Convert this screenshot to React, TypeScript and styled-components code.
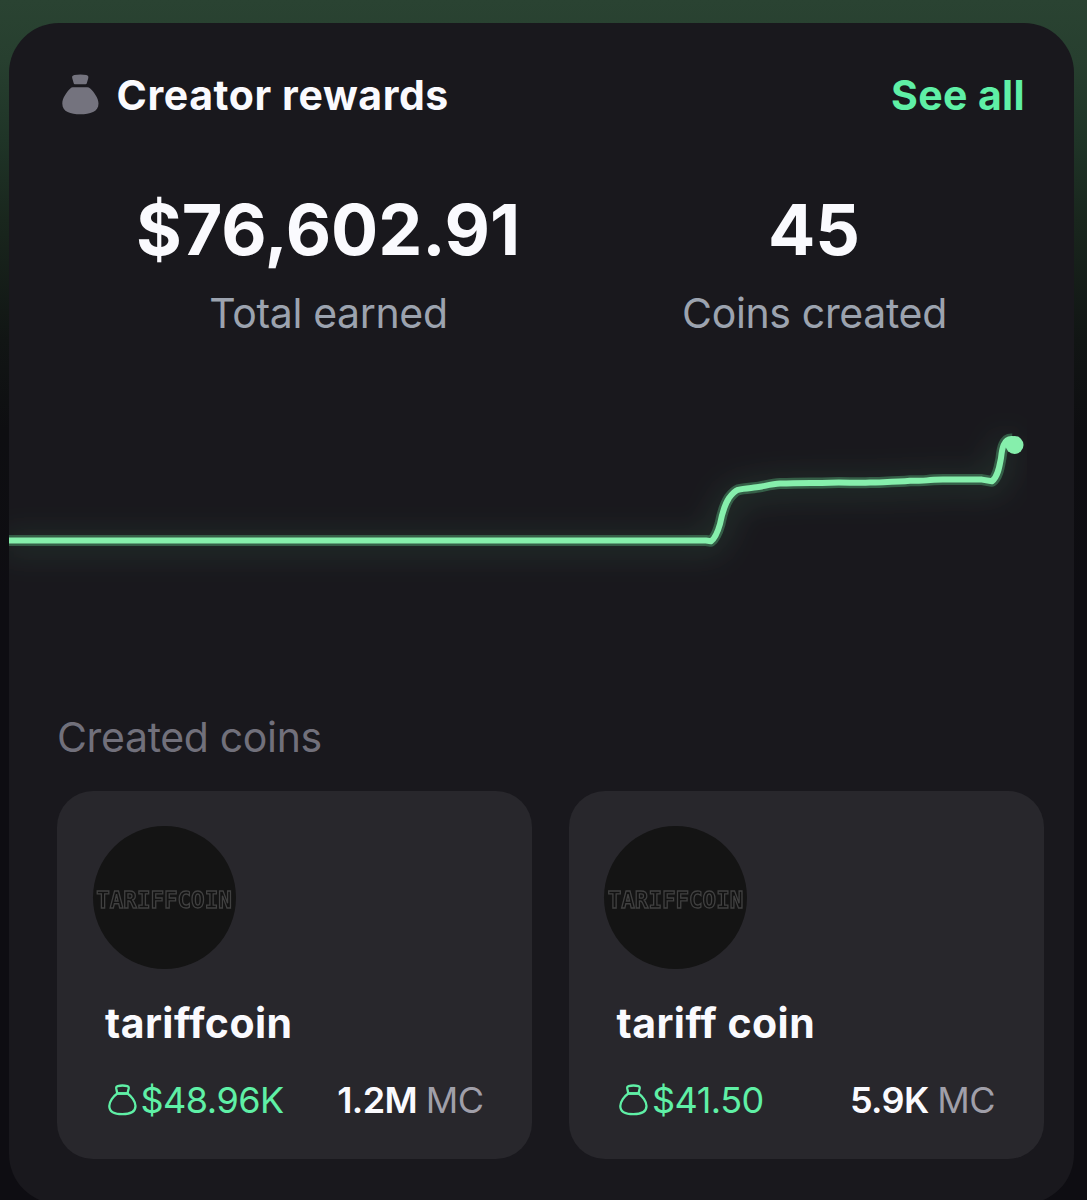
import React from "react";
import styled, { createGlobalStyle } from "styled-components";

const GlobalStyle = createGlobalStyle`
  * { box-sizing: border-box; }
  body {
    margin: 0;
    background: #0e0d12;
    font-family: Inter, "Liberation Sans", sans-serif;
    color: #fafafe;
  }
`;

const Screen = styled.div`
  height: 1200px;
  overflow: hidden;
  padding: 23px 13px 0 9px;
  background: linear-gradient(180deg, #2a4332 0px, #273f2f 60px, #1f3427 140px, #19261d 220px, #111514 340px, #0e0e11 430px, #0e0d12 600px);
`;

const Panel = styled.main`
  height: 1181px;
  border-radius: 50px;
  background: #19181d;
  display: flex;
  flex-direction: column;
`;

const Header = styled.header`
  display: flex;
  align-items: center;
  height: 52px;
  margin: 46px 49px 0 53px;
`;

const Title = styled.h1`
  margin: 0 auto 0 17.5px;
  font-size: 41px;
  font-weight: 700;
  line-height: 52px;
  letter-spacing: 0.6px;
  white-space: nowrap;
`;

const SeeAll = styled.a`
  font-size: 41px;
  font-weight: 700;
  line-height: 52px;
  letter-spacing: 0.35px;
  color: #5ff0a6;
  white-space: nowrap;
`;

const Stats = styled.section`
  display: grid;
  grid-template-columns: 486px 486px;
  margin: 65px 0 0 76.5px;
  height: 164px;
`;

const Stat = styled.div`
  display: flex;
  flex-direction: column;
  align-items: center;
`;

const StatValue = styled.div`
  font-size: 70px;
  font-weight: 700;
  line-height: 88px;
  letter-spacing: -0.1px;
  margin-right: 1px;
  white-space: nowrap;
`;

const StatLabel = styled.div`
  margin-top: 13px;
  font-size: 41px;
  line-height: 52px;
  letter-spacing: -0.35px;
  color: #9ca3af;
  white-space: nowrap;
`;

const Chart = styled.svg`
  display: block;
  width: 1018px;
  height: 200px;
  margin-top: 50px;
  flex: none;
`;

const SectionTitle = styled.h2`
  margin: 111px 0 0 48px;
  font-size: 41px;
  font-weight: 400;
  line-height: 52px;
  letter-spacing: -0.35px;
  color: #71707b;
`;

const Coins = styled.section`
  display: grid;
  grid-template-columns: 475px 475px;
  gap: 36.5px;
  margin: 28px 0 0 48px;
`;

const Coin = styled.article`
  height: 368px;
  padding: 35px 35.5px;
  border-radius: 36px;
  background: #28272c;
`;

const Avatar = styled.div`
  display: flex;
  align-items: center;
  justify-content: center;
  width: 143px;
  height: 143px;
  border-radius: 50%;
  background: #141414;
`;

const Wordmark = styled.span`
  margin-top: 4px;
  font-family: "DejaVu Sans Mono", monospace;
  font-size: 22.5px;
  font-weight: 700;
  line-height: 28px;
  color: #121212;
  -webkit-text-stroke: 1.3px #414141;
  filter: blur(0.5px);
`;

const CoinName = styled.h3`
  margin: 28px 12.5px 0;
  font-size: 41px;
  font-weight: 700;
  line-height: 52px;
  letter-spacing: 0.45px;
  white-space: nowrap;
`;

const CoinFooter = styled.div`
  display: flex;
  justify-content: space-between;
  align-items: center;
  height: 44px;
  margin: 29px 13px 0 15px;
  font-size: 36px;
  line-height: 44px;
  letter-spacing: -0.5px;
  white-space: nowrap;
`;

const Reward = styled.span`
  display: flex;
  align-items: center;
  gap: 4px;
  color: #5ff0a6;
`;

const Cap = styled.span`
  display: flex;
  gap: 8.5px;
  color: #a09fa9;
`;

const CapValue = styled.strong`
  font-weight: 600;
  letter-spacing: -0.6px;
  color: #fafafe;
`;

const BagIcon = styled.svg`
  display: block;
  flex: none;
`;

const SolidBag = () => (
  <BagIcon width="37" height="42" viewBox="0 0 37 42" fill="#74737e">
    <path d="M10.2 4C9.8 2.4 10.7 1.5 12.3 1.1C16 .3 21 .3 24.3 1.1C26 1.5 26.6 2.5 26.3 4L24.8 9.2Q24.5 10.2 23.5 10.2H12.8Q11.9 10.2 11.7 9.2Z" />
    <path d="M10.8 13.3H25.2Q27 13.3 28.2 14.5C32.5 18.5 36.5 24.5 36.5 29.5C36.5 38 28 40.3 18.3 40.3C8.6 40.3.3 38 .3 29.5C.3 24.5 4.2 18.5 8.3 14.5Q9.5 13.3 10.8 13.3Z" />
  </BagIcon>
);

const OutlineBag = () => (
  <BagIcon width="29" height="32" viewBox="0 0 29 32" fill="none" stroke="#5ff0a6" strokeWidth="2.3" strokeLinejoin="round">
    <path d="M9.3 9.5L8.2 4.2Q8 2.6 9.6 2.1C12.5 1.4 16.5 1.4 19.4 2.1Q21 2.6 20.7 4.2L19.5 9.5Z" />
    <path d="M9.3 9.5H19.5C23.5 12.3 27.5 17.5 27.5 22C27.5 28.2 22 30.2 14.4 30.2C6.9 30.2 1.3 28.2 1.3 22C1.3 17.5 5.3 12.3 9.3 9.5Z" />
  </BagIcon>
);

const LINE =
  "M-5 140.5H697L702 141.2C706 138.5 709 131 711 124C713 114 716 104 720 98C723 94 726 91 729 89.8C736 88 745 88 751 86.8C758 85.5 764 84 771 83.6C790 82.5 805 83.2 821 82.7C835 82.2 848 83.2 861 82.6C875 82 888 82 901 80.8C908 80.6 912 81.2 918 80.4C924 79.6 928 79.6 934 79.6H973L983 81.3C989 77 990.5 66 992 58C993 49 994.5 38.5 1003 39";

const RewardsChart = () => (
  <Chart viewBox="0 0 1018 200" fill="none">
    <defs>
      <filter id="glow" filterUnits="userSpaceOnUse" x="-60" y="-20" width="1140" height="260">
        <feGaussianBlur stdDeviation="15" />
      </filter>
    </defs>
    <path d={LINE} transform="translate(0 4)" stroke="#6ee79a" strokeOpacity="0.14" strokeWidth="16" filter="url(#glow)" />
    <path d={LINE} stroke="#6ee79a" strokeOpacity="0.3" strokeWidth="11" strokeLinejoin="round" />
    <path d={LINE} stroke="#86efac" strokeWidth="6" strokeLinejoin="round" strokeLinecap="round" />
    <circle cx="1005.5" cy="45" r="9" fill="#86efac" />
  </Chart>
);

const coins = [
  { name: "tariffcoin", reward: "$48.96K", cap: "1.2M" },
  { name: "tariff coin", reward: "$41.50", cap: "5.9K" },
];

export default function App() {
  return (
    <>
      <GlobalStyle />
      <Screen>
        <Panel>
          <Header>
            <SolidBag />
            <Title>Creator rewards</Title>
            <SeeAll>See all</SeeAll>
          </Header>
          <Stats>
            <Stat>
              <StatValue>$76,602.91</StatValue>
              <StatLabel>Total earned</StatLabel>
            </Stat>
            <Stat>
              <StatValue>45</StatValue>
              <StatLabel>Coins created</StatLabel>
            </Stat>
          </Stats>
          <RewardsChart />
          <SectionTitle>Created coins</SectionTitle>
          <Coins>
            {coins.map((c) => (
              <Coin key={c.name}>
                <Avatar>
                  <Wordmark>TARIFFCOIN</Wordmark>
                </Avatar>
                <CoinName>{c.name}</CoinName>
                <CoinFooter>
                  <Reward>
                    <OutlineBag />
                    {c.reward}
                  </Reward>
                  <Cap>
                    <CapValue>{c.cap}</CapValue>MC
                  </Cap>
                </CoinFooter>
              </Coin>
            ))}
          </Coins>
        </Panel>
      </Screen>
    </>
  );
}
